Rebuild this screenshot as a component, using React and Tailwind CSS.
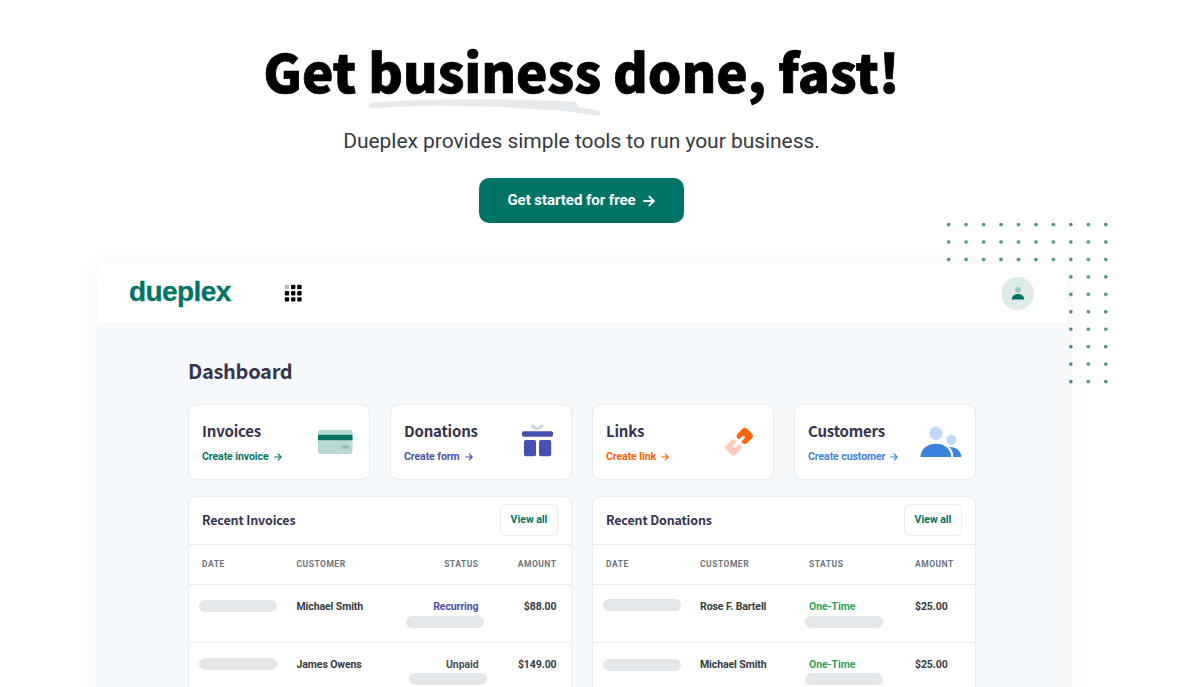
import React from "react";

const stats = [
  { title: "Invoices", action: "Create invoice", color: "text-[#007367]", Icon: InvoiceIcon },
  { title: "Donations", action: "Create form", color: "text-[#4a50b0]", Icon: GiftIcon },
  { title: "Links", action: "Create link", color: "text-[#fd6206]", Icon: LinkIcon },
  { title: "Customers", action: "Create customer", color: "text-[#3c82dc]", Icon: PeopleIcon },
];

function Arrow({ className }) {
  return (
    <svg viewBox="0 0 12 12" className={className} fill="none" stroke="currentColor" strokeLinecap="round" strokeLinejoin="round">
      <path d="M1 6h9.6M6.4 1.6 10.8 6 6.4 10.4" />
    </svg>
  );
}

function InvoiceIcon() {
  return (
    <svg width="60" height="50" viewBox="0 0 60 50">
      <rect x="9" y="14.7" width="34.5" height="24.3" rx="2.8" fill="#b9d7d3" />
      <rect x="9" y="19.8" width="34.5" height="5.4" fill="#007367" />
      <rect x="33.3" y="30.5" width="6.6" height="3" rx="1.2" fill="#8bbdb7" />
    </svg>
  );
}

function GiftIcon() {
  return (
    <svg width="60" height="50" viewBox="0 0 60 50">
      <path d="M20.3 10.2 24.6 13.3q1.6 1 3.2 0L32 10.2" fill="none" stroke="#cfd0e9" strokeWidth="3" />
      <rect x="11" y="16.3" width="31" height="5.5" rx="1.7" fill="#4a50b0" />
      <rect x="13" y="25" width="12" height="16.2" rx="1.7" fill="#4a50b0" />
      <rect x="28" y="25" width="12.2" height="16.2" rx="1.7" fill="#4a50b0" />
    </svg>
  );
}

function LinkIcon() {
  return (
    <svg width="60" height="50" viewBox="0 0 60 50">
      <rect x="25.2" y="14.3" width="13.2" height="13.2" rx="3.2" transform="rotate(45 31.8 20.9)" fill="#fd6206" />
      <rect x="13.6" y="25.9" width="13.2" height="13.2" rx="3.2" transform="rotate(45 20.2 32.5)" fill="#ffc9b9" />
      <path d="m30.3 22.4-8.6 8.6" fill="none" stroke="#fff" strokeWidth="3.2" strokeLinecap="round" />
    </svg>
  );
}

function PeopleIcon() {
  return (
    <svg width="60" height="50" viewBox="0 0 60 50">
      <circle cx="21" cy="18.3" r="6.8" fill="#c3d9f5" />
      <circle cx="36.4" cy="24.9" r="5" fill="#c3d9f5" />
      <path d="M6.2 42c-.6 0-.8-.5-.7-1 .8-7.5 7.5-12.3 15.5-12.3S35.5 33.5 36.200 41c.1.5-.1 1-.7 1z" fill="#3c82dc" />
      <path d="M38.2 42c.3-3.800-1-7.300-4-10 6.500 0 11 2.800 12.200 8.800.1.700-.2 1.200-.8 1.200z" fill="#3c82dc" />
    </svg>
  );
}

function StatCard({ title, action, color, Icon }) {
  return (
    <div className="flex h-[76px] justify-between rounded-lg border border-[#e9ecf0] bg-white pl-[13px]">
      <div className="pt-[15px]">
        <h3 className="font-['Noto_Sans_CJK_SC',sans-serif] text-[15px] leading-[22px] font-bold tracking-[-0.2px] text-[#36344f]">{title}</h3>
        <a className={`mt-2 flex items-center gap-[5px] text-[10.5px] leading-[14px] font-bold tracking-[-0.07px] ${color}`}>
          {action}
          <Arrow className="h-2 w-2 [stroke-width:1.8]" />
        </a>
      </div>
      <div className="mt-[10px] h-[50px] w-[60px]">
        <Icon />
      </div>
    </div>
  );
}

function Bar({ className }) {
  return <div className={`h-3 w-[78px] rounded-full bg-[#e4e7ea] ${className}`} />;
}

function Row({ grid, name, status, statusColor, amount, align, dateBar, statusBar }) {
  return (
    <div className={`grid h-[58px] border-b border-[#e9ecef] text-[10.5px] leading-[14px] font-bold tracking-[-0.09px] text-[#343a40] ${grid}`}>
      <div><Bar className={dateBar} /></div>
      <div className="pt-[15px]">{name}</div>
      <div className={`pt-[15px] ${align}`}>
        <div className={statusColor}>{status}</div>
        <Bar className={statusBar} />
      </div>
      <div className={`pt-[15px] ${align}`}>{amount}</div>
    </div>
  );
}

function Panel({ title, grid, align, children }) {
  return (
    <div className="h-[220px] rounded-t-lg border border-[#e9ecf0] bg-white">
      <div className="flex h-[48px] items-start justify-between border-b border-[#e9ecef] pl-[13px]">
        <h3 className="mt-[13px] font-['Noto_Sans_CJK_SC',sans-serif] text-[12.5px] leading-5 font-bold tracking-[-0.15px] text-[#36344f]">{title}</h3>
        <a className="mt-[7px] mr-[13px] flex h-8 w-[58px] items-center justify-center rounded-md border border-[#e9ecf0] pb-px text-[10.5px] font-bold text-[#007367]">
          View all
        </a>
      </div>
      <div className={`grid h-10 items-center border-b border-[#e9ecef] text-[8.5px] font-bold tracking-[0.5px] text-[#6c757d] ${grid}`}>
        <div>DATE</div>
        <div>CUSTOMER</div>
        <div className={align}>STATUS</div>
        <div className={align}>AMOUNT</div>
      </div>
      {children}
    </div>
  );
}

const invoiceGrid = "grid-cols-[94.5px_102px_80px_78px] pl-[13px]";
const donationGrid = "grid-cols-[94px_109px_106px_60px] pl-[13px]";

const App = () => {
  return (
    <div className="h-[687px] overflow-hidden bg-white font-['Roboto',sans-serif]">
      {/* Hero */}
      <div className="flex h-[264px] w-[1163px] flex-col items-center pt-[34px]">
        <h1 className="font-['Noto_Sans_CJK_SC',sans-serif] text-[53px] leading-[72px] font-black tracking-[-0.15px] whitespace-nowrap text-black [-webkit-text-stroke:0.7px_#000]">
          Get{" "}
          <span className="relative inline-block">
            <svg className="absolute top-[64px] left-px" width="233" height="19" viewBox="0 0 233 19">
              <path d="M2.5 4.7C60 .5 130 .2 205 3.7c2.5.2 3.8 2 3.5 5.3L229.5 12.7c3 .8 2.5 5.4-.8 5L200 13.5C150 10 90 4.5 2.5 10.3c-3.2 0-3.2-5.4 0-5.6z" fill="#e6eaed" />
            </svg>
            <span className="relative">business</span>
          </span>{" "}
          done, fast!
        </h1>
        <p className="mt-[19px] text-[21px] leading-8 tracking-[-0.04px] text-[#343a40]">Dueplex provides simple tools to run your business.</p>
        <a className="mt-[21px] flex h-[45px] w-[205px] items-center justify-center gap-[7px] rounded-[10px] bg-[#007367] pr-px text-[15px] font-bold tracking-[-0.05px] text-white">
          Get started for free
          <Arrow className="h-3 w-3 [stroke-width:1.9]" />
        </a>
      </div>

      {/* Product preview */}
      <div className="relative ml-[97px] w-[970px]">
        <svg className="absolute -top-[42px] left-[848px]" width="166" height="164" viewBox="0 0 166 164">
          <defs>
            <pattern id="dots" width="17.45" height="17.45" patternUnits="userSpaceOnUse">
              <circle cx="3.7" cy="2.5" r="1.8" fill="#4a8d83" />
            </pattern>
          </defs>
          <rect width="166" height="164" fill="url(#dots)" />
        </svg>
        <div className="relative h-[440px] rounded-t-lg bg-[#f6fafd] shadow-[0_0_28px_rgba(0,0,0,0.06)]">
          <div className="flex h-[58px] items-center rounded-t-lg bg-white pr-[33px] pl-8">
            <span className="-mt-[3px] w-[103px] font-['Liberation_Sans',sans-serif] text-[28px] leading-8 font-bold tracking-[-0.6px] text-[#007367] [-webkit-text-stroke:0.3px_#007367]">dueplex</span>
            <svg className="ml-[52px]" width="18" height="18" viewBox="0 0 18 18">
              {[0, 1, 2].map((r) =>
                [0, 1, 2].map((c) => (
                  <rect key={`${r}${c}`} x={0.8 + c * 6.2} y={0.8 + r * 6.2} width="4.4" height="4.4" rx="1" fill={r + c ? "#000" : "#bbb"} />
                ))
              )}
            </svg>
            <div className="ml-auto flex h-[33px] w-[33px] items-center justify-center rounded-full bg-[#deebe9]">
              <svg width="14" height="14" viewBox="0 0 14 14">
                <circle cx="7" cy="3.7" r="2.8" fill="#9cc5bf" />
                <path d="M.8 13.5c0-3.5 2.7-5.6 6.2-5.6s6.2 2.1 6.2 5.6z" fill="#007367" />
              </svg>
            </div>
          </div>

          <div className="px-[91px] pt-[34px]">
            <h2 className="font-['Noto_Sans_CJK_SC',sans-serif] text-[20px] leading-[30px] font-bold tracking-[-0.3px] text-[#36344f]">Dashboard</h2>
            <div className="mt-[18px] grid grid-cols-[182px_182px_182px_182px] gap-x-5">
              {stats.map((s) => (
                <StatCard key={s.title} {...s} />
              ))}
            </div>
            <div className="mt-4 grid grid-cols-[384px_384px] gap-5">
              <Panel title="Recent Invoices" grid={invoiceGrid} align="text-right">
                <Row grid={invoiceGrid} name="Michael Smith" status="Recurring" statusColor="text-[#4a50b0]" amount="$88.00" align="text-right" dateBar="mt-[15px] -ml-[3px]" statusBar="mt-[2px] ml-[7px]" />
                <Row grid={invoiceGrid} name="James Owens" status="Unpaid" statusColor="text-[#495057]" amount="$149.00" align="text-right" dateBar="mt-[15px] -ml-[3px]" statusBar="mt-[1px] ml-[10px]" />
              </Panel>
              <Panel title="Recent Donations" grid={donationGrid} align="text-left">
                <Row grid={donationGrid} name="Rose F. Bartell" status="One-Time" statusColor="text-[#2fa35b]" amount="$25.00" align="text-left" dateBar="mt-[14px] -ml-[3px]" statusBar="mt-[2px] -ml-1" />
                <Row grid={donationGrid} name="Michael Smith" status="One-Time" statusColor="text-[#2fa35b]" amount="$25.00" align="text-left" dateBar="mt-[16px] -ml-[3px]" statusBar="mt-[1px] -ml-1" />
              </Panel>
            </div>
          </div>
        </div>
      </div>
    </div>
  );
};

export default App;
